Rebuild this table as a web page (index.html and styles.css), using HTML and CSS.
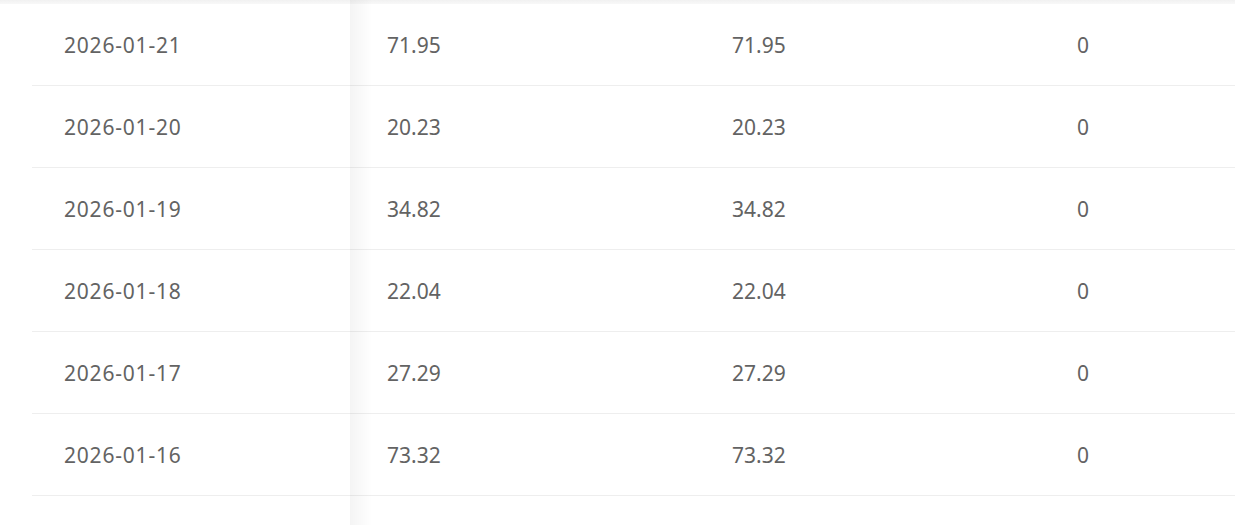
FILE: index.html
```html
<!DOCTYPE html>
<html>
<head>
<meta charset="utf-8">
<link rel="stylesheet" href="styles.css">
</head>
<body>
<div class="page">
  <div class="top-band"></div>
  <div class="table">
    <div class="gutter"></div>
    <div class="fixed">
      <div class="row"><div class="cell c1">2026-01-21</div></div>
      <div class="row"><div class="cell c1">2026-01-20</div></div>
      <div class="row"><div class="cell c1">2026-01-19</div></div>
      <div class="row"><div class="cell c1">2026-01-18</div></div>
      <div class="row"><div class="cell c1">2026-01-17</div></div>
      <div class="row"><div class="cell c1">2026-01-16</div></div>
    </div>
    <div class="scroll">
      <div class="row"><div class="cell">71.95</div><div class="cell">71.95</div><div class="cell">0</div></div>
      <div class="row"><div class="cell">20.23</div><div class="cell">20.23</div><div class="cell">0</div></div>
      <div class="row"><div class="cell">34.82</div><div class="cell">34.82</div><div class="cell">0</div></div>
      <div class="row"><div class="cell">22.04</div><div class="cell">22.04</div><div class="cell">0</div></div>
      <div class="row"><div class="cell">27.29</div><div class="cell">27.29</div><div class="cell">0</div></div>
      <div class="row"><div class="cell">73.32</div><div class="cell">73.32</div><div class="cell">0</div></div>
    </div>
  </div>
</div>
</body>
</html>
```
FILE: styles.css
```css
html, body {
  margin: 0;
  padding: 0;
  background: #fff;
  overflow: hidden;
}
.page {
  width: 1235px;
  height: 525px;
  overflow: hidden;
  font-family: "Noto Sans", "Open Sans", sans-serif;
  font-size: 21px;
  color: #636363;
}
.top-band {
  height: 4px;
  background: linear-gradient(#f1f1f1, #f8f8f8);
}
.table {
  display: flex;
  height: 521px;
}
.gutter {
  width: 32px;
  flex: none;
}
.fixed {
  width: 318px;
  flex: none;
  position: relative;
  z-index: 1;
  background: #fff;
}
.fixed::after {
  content: "";
  position: absolute;
  top: -4px;
  bottom: 0;
  left: 100%;
  width: 22px;
  background: linear-gradient(to right, rgba(0, 0, 0, 0.045), rgba(0, 0, 0, 0));
  pointer-events: none;
}
.scroll {
  flex: 1;
  min-width: 0;
}
.row {
  display: flex;
  height: 81px;
  border-bottom: 1px solid #eeeeee;
}
.cell {
  width: 345px;
  flex: none;
  box-sizing: border-box;
  padding-left: 37px;
  display: flex;
  align-items: center;
}
.cell.c1 {
  width: 318px;
  padding-left: 32px;
  letter-spacing: 0.8px;
}
```
